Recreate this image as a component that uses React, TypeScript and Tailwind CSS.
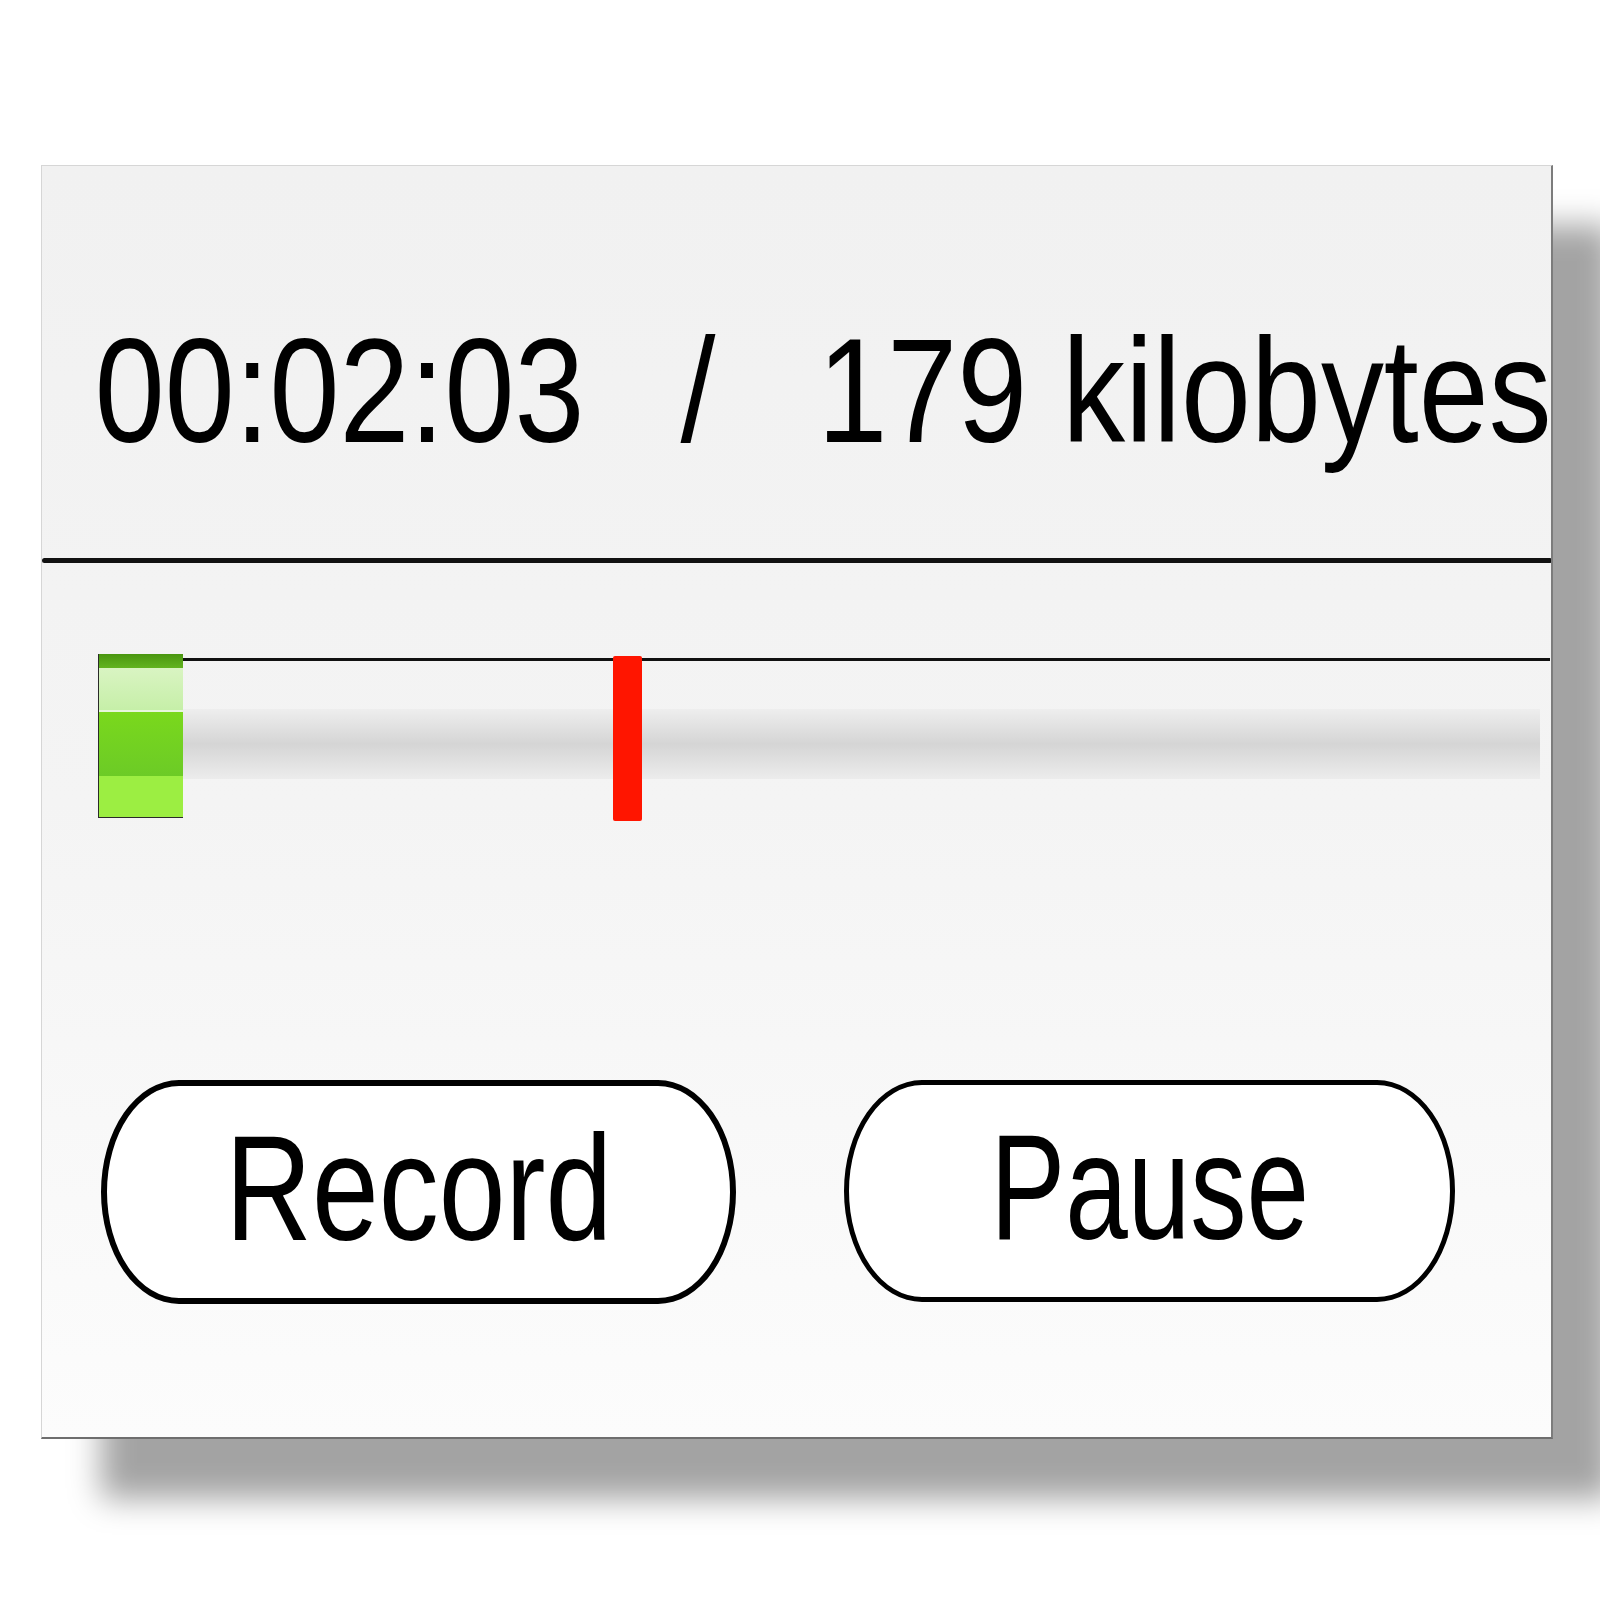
export default function App() {
  const font = { fontFamily: '"Liberation Sans", Arial, sans-serif' };

  return (
    <div className="min-h-screen w-[1600px] bg-white pt-[165px] pl-[41px] overflow-hidden">
      {/* recorder panel */}
      <div
        className="w-[1512px] h-[1274px] flex flex-col overflow-hidden bg-linear-to-b from-[#f1f1f1] via-[#f4f4f4] to-[#fcfcfc] border-t border-l border-t-[#d6d6d6] border-l-[#d6d6d6] border-r-2 border-b-2 border-r-[#7c7c7c] border-b-[#6e6e6e] shadow-[60px_60px_30px_rgba(0,0,0,0.36)]"
        style={font}
      >
        {/* time / size readout */}
        <div className="mt-[151px] h-[148px] flex items-start whitespace-nowrap text-[148px] leading-none text-black origin-left scale-x-85 pl-[62px]">
          <span>00:02:03</span>
          <span className="ml-[113px]">/</span>
          <span className="ml-[120px]">179 kilobytes</span>
        </div>

        <div className="mt-[93px] h-[5px] w-[1510px] bg-[#111] rounded-full" />

        {/* level meter */}
        <div className="mt-[91px] ml-[56px] w-[1452px] h-[167px] flex relative">
          <div className="w-[85px] h-[164px] flex flex-col border-l border-b border-[#2a2a2a]">
            <div className="h-[14px] bg-linear-to-b from-[#4a9610] to-[#62b420]" />
            <div className="h-[42px] bg-linear-to-b from-[#d9f4c2] to-[#c6efa8]" />
            <div className="h-[2px] bg-[#e8f6dc]" />
            <div className="h-[64px] bg-linear-to-b from-[#7ad81c] to-[#6ccb26]" />
            <div className="flex-1 bg-[#9cee42]" />
          </div>
          <div className="flex-1 flex flex-col">
            <div className="mt-[4px] h-[3px] bg-[#111]" />
            <div className="mt-[48px] h-[70px] mr-[10px] bg-linear-to-b from-[#eeeeee] via-[#d5d5d5] to-[#ececec]" />
          </div>
          <div className="absolute left-[515px] top-[2px] w-[29px] h-[165px] bg-[#ff1500] rounded-[2px]" />
        </div>

        {/* buttons */}
        <div className="mt-[259px] pl-[59px] flex gap-[108px]">
          <button className="w-[635px] h-[224px] bg-white border-[6px] border-black rounded-[78px/112px] flex items-center justify-center">
            <span className="text-[150px] leading-none text-black scale-x-[0.8] -translate-y-[4px]">Record</span>
          </button>
          <button className="w-[611px] h-[222px] bg-white border-[5px] border-black rounded-[78px/111px] flex items-center justify-center">
            <span className="text-[150px] leading-none text-black scale-x-75 -translate-y-[4px]">Pause</span>
          </button>
        </div>
      </div>
    </div>
  );
}
